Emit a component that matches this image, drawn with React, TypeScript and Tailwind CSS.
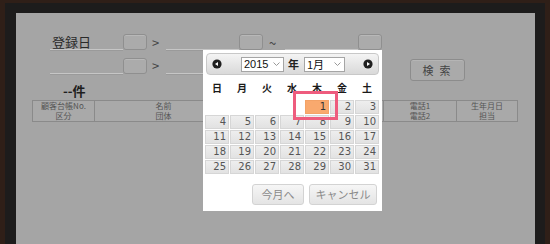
import React from "react";

const jp = { fontFamily: '"Noto Sans CJK JP", "Liberation Sans", sans-serif' };
const num = { fontFamily: '"DejaVu Sans", "Noto Sans CJK JP", sans-serif' };

const Field = ({ label, w = 73 }: { label?: string; w?: number }) => (
  <div className="flex items-end">
    <div
      className="h-[16px] border-b border-[#c6c6c6] pl-[2px] text-[13px] leading-[15px] text-[#2a2a2a] shadow-[0_1px_0_#9a9a9a]"
      style={{ width: w }}
    >
      {label}
    </div>
    <div className="h-[16px] w-[24px] rounded-[3px] border border-[#8f8f8f] bg-[#ababab] shadow-[inset_0_1px_0_#b8b8b8]" />
  </div>
);

const Chevron = () => (
  <svg width="7" height="4" viewBox="0 0 7 4" className="ml-auto mr-[3px] shrink-0">
    <path d="M0.5 0.5 L3.5 3.5 L6.5 0.5" fill="none" stroke="#999" strokeWidth="1" />
  </svg>
);

const NavIcon = ({ dir }: { dir: "l" | "r" }) => (
  <svg width="10" height="10" viewBox="0 0 10 10">
    <circle cx="5" cy="5" r="4.6" fill="#1f1f1f" />
    {dir === "l" ? (
      <polygon points="3,5 6,3 6,7" fill="#fff" />
    ) : (
      <polygon points="7,5 4,3 4,7" fill="#fff" />
    )}
  </svg>
);

const days = ["日", "月", "火", "水", "木", "金", "土"];

const cells: (number | null)[] = [
  null, null, null, null, 1, 2, 3,
  ...Array.from({ length: 28 }, (_, i) => i + 4),
];

export default function App() {
  return (
    <div className="relative h-[244px] w-[550px] overflow-hidden bg-[#2f1f18]" style={jp}>
      <div className="ml-[5px] mt-[3px] h-[260px] w-[540px] bg-[#1d1c1c] pl-[11px] pr-[10px] pt-[10px]">
        <div className="h-[260px] w-[519px] bg-[#a5a5a5] pt-[21px]">
          {/* row 1 */}
          <div className="flex h-[16px] items-end pl-[34px]">
            <Field label="登録日" />
            <span className="ml-[5px] w-[14px] text-[13px] leading-[15px] text-[#444]">&gt;</span>
            <Field />
            <span className="ml-[6px] w-[16px] text-[13px] leading-[15px] text-[#444]">~</span>
            <Field />
          </div>
          {/* row 2 */}
          <div className="mt-[8px] flex h-[23px] items-start pl-[34px]">
            <Field />
            <span className="ml-[5px] w-[14px] text-[13px] leading-[15px] text-[#444]">&gt;</span>
            <Field />
            <button className="ml-[147px] mt-[1px] h-[22px] w-[55px] rounded-[3px] border border-[#8c8c8c] bg-[#aaaaaa] pl-[4px] text-[11px] tracking-[6px] text-[#444] shadow-[inset_0_1px_0_#b5b5b5]">
              検索
            </button>
          </div>
          {/* count */}
          <div className="mt-[2px] h-[17px] pl-[47px] text-[13px] font-bold leading-[15px] text-[#1e1e1e]">--件</div>
          {/* table header */}
          <div className="ml-[16px] flex h-[22px] w-[486px] border border-[#8a8a8a] bg-[#a9a9a9] text-center text-[8px] leading-[10px] text-[#555]">
            <div className="flex w-[62px] flex-col justify-center border-r border-[#8a8a8a]">
              <span>顧客台帳No.</span>
              <span>区分</span>
            </div>
            <div className="flex w-[138px] flex-col justify-center border-r border-[#8a8a8a]">
              <span>名前</span>
              <span>団体</span>
            </div>
            <div className="flex w-[76px] flex-col justify-center border-r border-[#8a8a8a]">
              <span>住所</span>
            </div>
            <div className="flex w-[75px] flex-col justify-center border-r border-[#8a8a8a]">
              <span>備考</span>
            </div>
            <div className="flex w-[73px] flex-col justify-center border-r border-[#8a8a8a]">
              <span>電話1</span>
              <span>電話2</span>
            </div>
            <div className="flex flex-1 flex-col justify-center">
              <span>生年月日</span>
              <span>担当</span>
            </div>
          </div>
        </div>
      </div>

      {/* datepicker popup */}
      <div className="absolute left-[203px] top-[50px] h-[161px] w-[179px] bg-white px-[2px] pt-[3px]">
        <div className="mx-[1px] flex h-[22px] items-center rounded-[4px] border border-[#c8c8c8] bg-gradient-to-b from-[#f4f4f4] to-[#d9d9d9] pl-[5px] pr-[5px]">
          <NavIcon dir="l" />
          <div className="ml-[19px] flex h-[15px] w-[43px] items-center border border-[#a5a5a5] bg-white pl-[2px] text-[11px] leading-[13px] text-[#111]" style={{ fontFamily: '"Liberation Sans", sans-serif' }}>
            2015
            <Chevron />
          </div>
          <span className="ml-[4px] text-[11px] font-bold leading-[13px] text-[#222]">年</span>
          <div className="ml-[5px] flex h-[15px] w-[41px] items-center border border-[#a5a5a5] bg-white pl-[2px] text-[11px] leading-[13px] text-[#111]">
            1月
            <Chevron />
          </div>
          <div className="ml-auto">
            <NavIcon dir="r" />
          </div>
        </div>
        <div className="grid h-[25px] grid-cols-[repeat(7,24px)] items-center gap-x-[1px] pt-[1px] text-center text-[10px] font-bold leading-[12px] text-[#1a1a1a]">
          {days.map((d) => (
            <span key={d}>{d}</span>
          ))}
        </div>
        <div className="grid grid-cols-[repeat(7,24px)] gap-[1px]" style={num}>
          {cells.map((c, i) =>
            c === null ? (
              <div key={i} className="h-[14px]" />
            ) : (
              <div
                key={i}
                className={
                  c === 1
                    ? "h-[14px] border border-[#f3a266] bg-[#f9a96e] pr-[2px] text-right text-[10px] leading-[12px] text-[#333]"
                    : "h-[14px] border border-[#d6d6d6] bg-gradient-to-b from-[#eeeeee] to-[#e2e2e2] pr-[2px] text-right text-[10px] leading-[12px] text-[#555]"
                }
              >
                {c}
              </div>
            )
          )}
        </div>
        <div className="mr-[3px] mt-[10px] flex justify-end gap-[5px]">
          <button className="h-[21px] w-[52px] rounded-[3px] border border-[#d3d3d3] bg-gradient-to-b from-[#f6f6f6] to-[#e4e4e4] text-[11px] text-[#8a8a8a]">
            今月へ
          </button>
          <button className="h-[21px] w-[68px] rounded-[3px] border border-[#d3d3d3] bg-gradient-to-b from-[#f6f6f6] to-[#e4e4e4] text-[11px] text-[#8a8a8a]">
            キャンセル
          </button>
        </div>
      </div>

      {/* highlight annotation */}
      <div className="absolute left-[293px] top-[91px] h-[29px] w-[45px] border-[3px] border-[#ee5c7e]" />
    </div>
  );
}
